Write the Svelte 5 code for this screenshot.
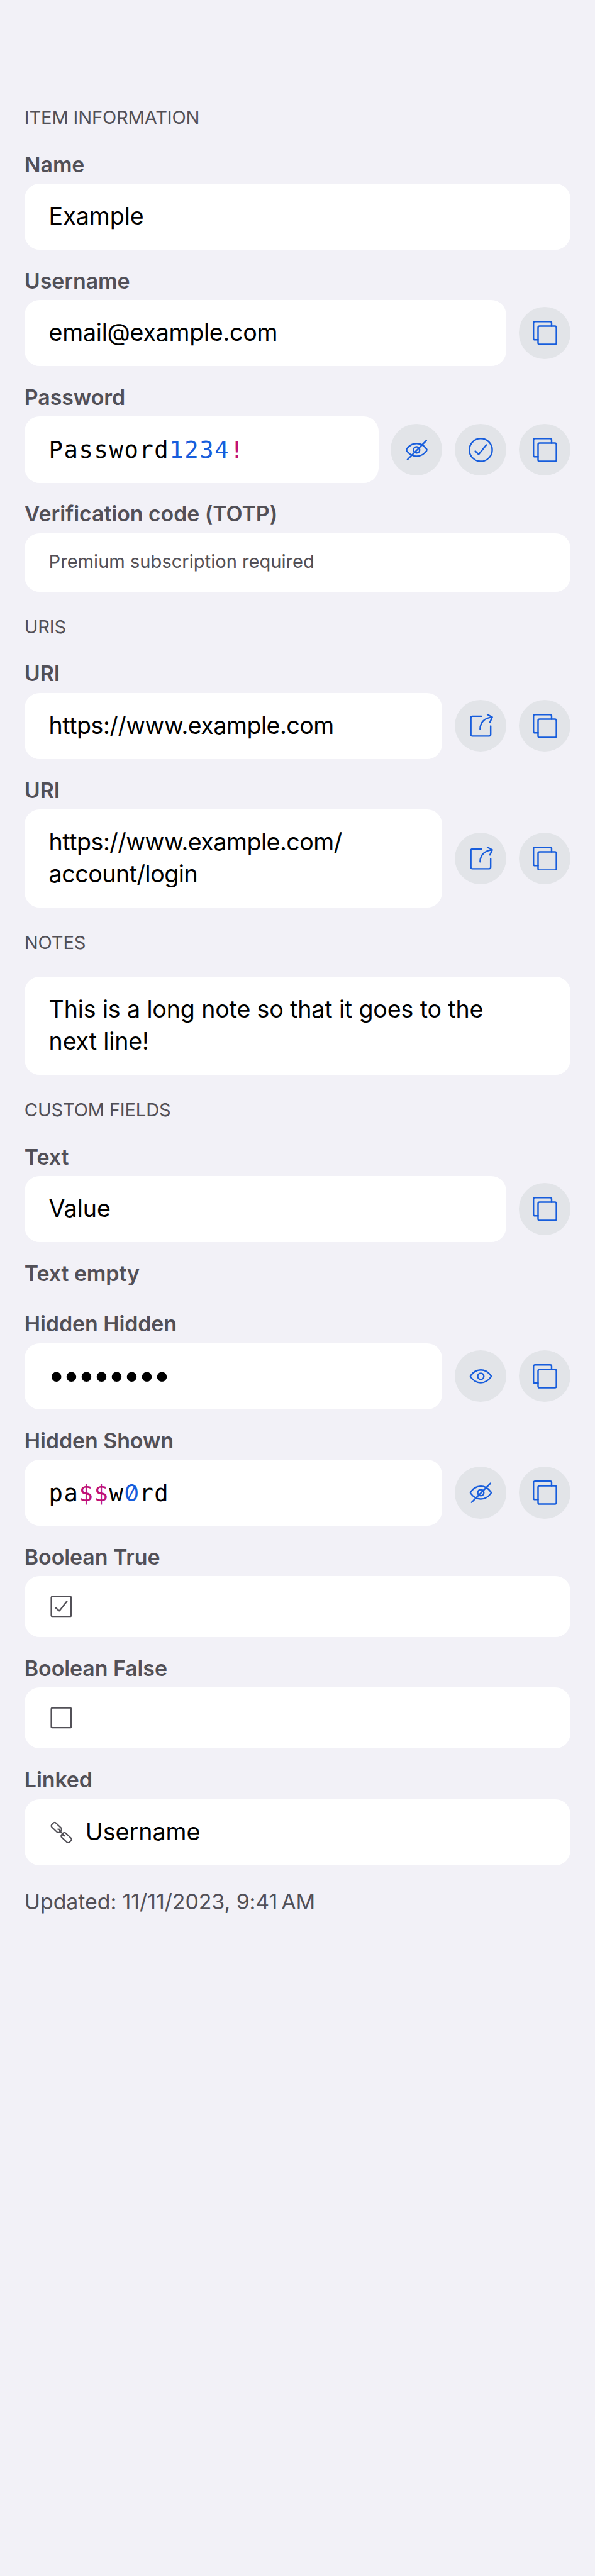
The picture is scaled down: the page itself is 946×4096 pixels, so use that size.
<script>
  const sections = [
    {
      title: 'ITEM INFORMATION',
      fields: [
        { label: 'Name', value: 'Example' },
        { label: 'Username', value: 'email@example.com', track: -0.03, actions: ['copy'] },
        {
          label: 'Password',
          runs: [['Password', ''], ['1234', 'digit'], ['!', 'symbol']],
          actions: ['hide', 'check', 'copy']
        },
        { label: 'Verification code (TOTP)', note: 'Premium subscription required' }
      ]
    },
    {
      title: 'URIS',
      fields: [
        { label: 'URI', value: 'https://www.example.com', track: -0.06, actions: ['open', 'copy'] },
        { label: 'URI', value: 'https://www.example.com/\naccount/login', track: -0.06, actions: ['open', 'copy'] }
      ]
    },
    {
      title: 'NOTES',
      fields: [{ value: 'This is a long note so that it goes to the\nnext line!', track: -0.017 }]
    },
    {
      title: 'CUSTOM FIELDS',
      fields: [
        { label: 'Text', value: 'Value', actions: ['copy'] },
        { label: 'Text empty' },
        { label: 'Hidden Hidden', masked: '••••••••', actions: ['show', 'copy'] },
        {
          label: 'Hidden Shown',
          runs: [['pa', ''], ['$$', 'symbol'], ['w', ''], ['0', 'digit zero'], ['rd', '']],
          actions: ['hide', 'copy']
        },
        { label: 'Boolean True', box: 'checked' },
        { label: 'Boolean False', box: 'unchecked' },
        { label: 'Linked', linked: 'Username' }
      ]
    }
  ];
</script>

{#snippet icon(name)}
  <svg viewBox="0 0 48 48" aria-hidden="true">
    {#if name === 'copy'}
      <path d="M10.5 37.5h-6a3 3 0 0 1-3-3v-30a3 3 0 0 1 3-3h30a2.600 2.600 0 0 1 2.600 2.600v6.400" />
      <rect x="10.500" y="10.500" width="36" height="36" rx="3" />
    {:else if name === 'check'}
      <circle cx="24" cy="24" r="22.500" />
      <path d="M13.300 26.500l5.600 5.400q1.100.9 2-.3L34.900 14.300" />
    {:else if name === 'hide' || name === 'show'}
      <path d="M4.400 22.200C9 16 16 11.500 24 11.500S39 16 43.600 22.200a2.900 2.900 0 0 1 0 3.600C39 32 32 36.500 24 36.500S9 32 4.400 25.800a2.900 2.900 0 0 1 0-3.600z" />
      <circle cx="24" cy="24" r="6" />
      {#if name === 'hide'}<path d="M43 5.700L6 43" />{/if}
    {:else if name === 'open'}
      <path d="M25 4.800H7.500a3 3 0 0 0-3 3v33a3 3 0 0 0 3 3h33a3 3 0 0 0 3-3V24" />
      <path d="M22.700 30C22.700 17 32 7.600 45.500 7" />
      <path d="M37.300 1.600L46.600 6.600L42.200 16.500" />
    {:else if name === 'checked' || name === 'unchecked'}
      <rect x="4.500" y="4.500" width="39" height="39" rx="2.500" />
      {#if name === 'checked'}<path d="M13 26.500l6 5.500q1.200.8 2.200-.3L35 14" />{/if}
    {:else if name === 'link'}
      <g stroke-width="2.700">
        <rect x="3.900" y="9.100" width="21.500" height="11.400" rx="3.800" transform="rotate(43 14.600 14.800)" />
        <rect x="23.200" y="28.900" width="21.500" height="11.400" rx="3.800" transform="rotate(43 33.900 34.600)" />
        <path d="M17.500 18.200l3.500.3 .3 3.600M20.800 21.400l7.200 6.600M27.300 27.200l.2 3.200 3.300.7" />
      </g>
    {/if}
  </svg>
{/snippet}

<main>
  {#each sections as section}
    <section>
      <h2>{section.title}</h2>
      <div class="fields" class:bare={!section.fields[0].label}>
        {#each section.fields as f}
          <div class="field">
            {#if f.label}<div class="label">{f.label}</div>{/if}
            {#if f.value || f.runs || f.note || f.masked || f.box || f.linked}
              <div class="row">
                <div class="card" class:small={f.note} class:toggle={f.box}>
                  {#if f.value}
                    <span class="value" style:letter-spacing="{f.track ?? 0}rem">{f.value}</span>
                  {:else if f.runs}
                    <span class="mono">{#each f.runs as [text, kind]}<span class={kind}>{text}</span>{/each}</span>
                  {:else if f.note}
                    {f.note}
                  {:else if f.masked}
                    <span class="masked">{f.masked}</span>
                  {:else if f.box}
                    {@render icon(f.box)}
                  {:else}
                    <div class="linked">{@render icon('link')}<span>{f.linked}</span></div>
                  {/if}
                </div>
                {#each f.actions ?? [] as action}
                  <button aria-label={action}>{@render icon(action)}</button>
                {/each}
              </div>
            {/if}
          </div>
        {/each}
      </div>
    </section>
  {/each}
  <p class="updated">Updated: 11/11/2023, 9:41&#8239;AM</p>
</main>

<style>
  :global(html) {
    font-size: calc(100vw / 117);
  }
  :global(body) {
    background: #f2f1f7;
  }
  main {
    box-sizing: border-box;
    min-height: 100vh;
    padding: 16.2rem 4.8rem 0;
    font-family: Inter, sans-serif;
    font-size: 4.65rem;
    line-height: 6.3rem;
    color: #000;
  }
  section {
    padding-top: 4.43rem;
  }
  h2 {
    margin: 0;
    font-size: 3.6rem;
    font-weight: 400;
    line-height: 5rem;
    letter-spacing: -0.02rem;
    color: #525057;
  }
  .fields {
    display: flex;
    flex-direction: column;
    gap: 3.325rem;
    padding-top: 3.87rem;
  }
  .fields.bare {
    padding-top: 4.2rem;
  }
  .label {
    height: 5.6rem;
    margin-bottom: 1rem;
    font-size: 4.2rem;
    font-weight: 600;
    line-height: 5.6rem;
    letter-spacing: -0.01rem;
    color: #525057;
  }
  .row {
    display: flex;
    align-items: center;
    gap: 2.4rem;
  }
  .card {
    box-sizing: border-box;
    flex: 1;
    min-width: 0;
    padding: 3.35rem 4.8rem;
    border-radius: 3rem;
    background: #fff;
  }
  .card.small {
    padding: 3.15rem 4.8rem 3.35rem;
    font-size: 3.6rem;
    line-height: 5rem;
    color: #525057;
  }
  .card.toggle {
    padding: 3.6rem 4.8rem;
    color: #525057;
  }
  .value {
    display: block;
    white-space: pre-line;
  }
  .mono {
    display: block;
    box-sizing: border-box;
    height: 6.3rem;
    padding-top: 0.1rem;
    font-family: 'DejaVu Sans Mono', monospace;
    font-size: 4.6rem;
    letter-spacing: 0.195rem;
  }
  .masked {
    display: block;
    box-sizing: border-box;
    height: 6.3rem;
    margin-left: -0.52rem;
    padding-top: 0.4rem;
    font-family: 'DejaVu Sans Mono', monospace;
    font-size: 6.67rem;
    letter-spacing: -1.05rem;
  }
  .digit {
    color: #175ddc;
  }
  .symbol {
    color: #c01176;
  }
  .zero {
    font-family: Inter, sans-serif;
    font-feature-settings: 'zero';
    letter-spacing: 0.06rem;
  }
  .linked {
    display: flex;
    align-items: center;
    gap: 2.4rem;
  }
  .linked svg {
    color: #525057;
  }
  button {
    display: grid;
    place-items: center;
    flex: none;
    width: 10.2rem;
    height: 10.2rem;
    padding: 0;
    border: 0;
    border-radius: 50%;
    background: #e2e4e8;
    color: #175ddc;
  }
  svg {
    display: block;
    width: 4.8rem;
    height: 4.8rem;
    fill: none;
    stroke: currentColor;
    stroke-width: 3;
    stroke-linecap: round;
    stroke-linejoin: round;
  }
  .updated {
    margin: 4.4rem 0 0;
    font-size: 4.2rem;
    line-height: 5.6rem;
    letter-spacing: -0.01rem;
    color: #525057;
  }
</style>
